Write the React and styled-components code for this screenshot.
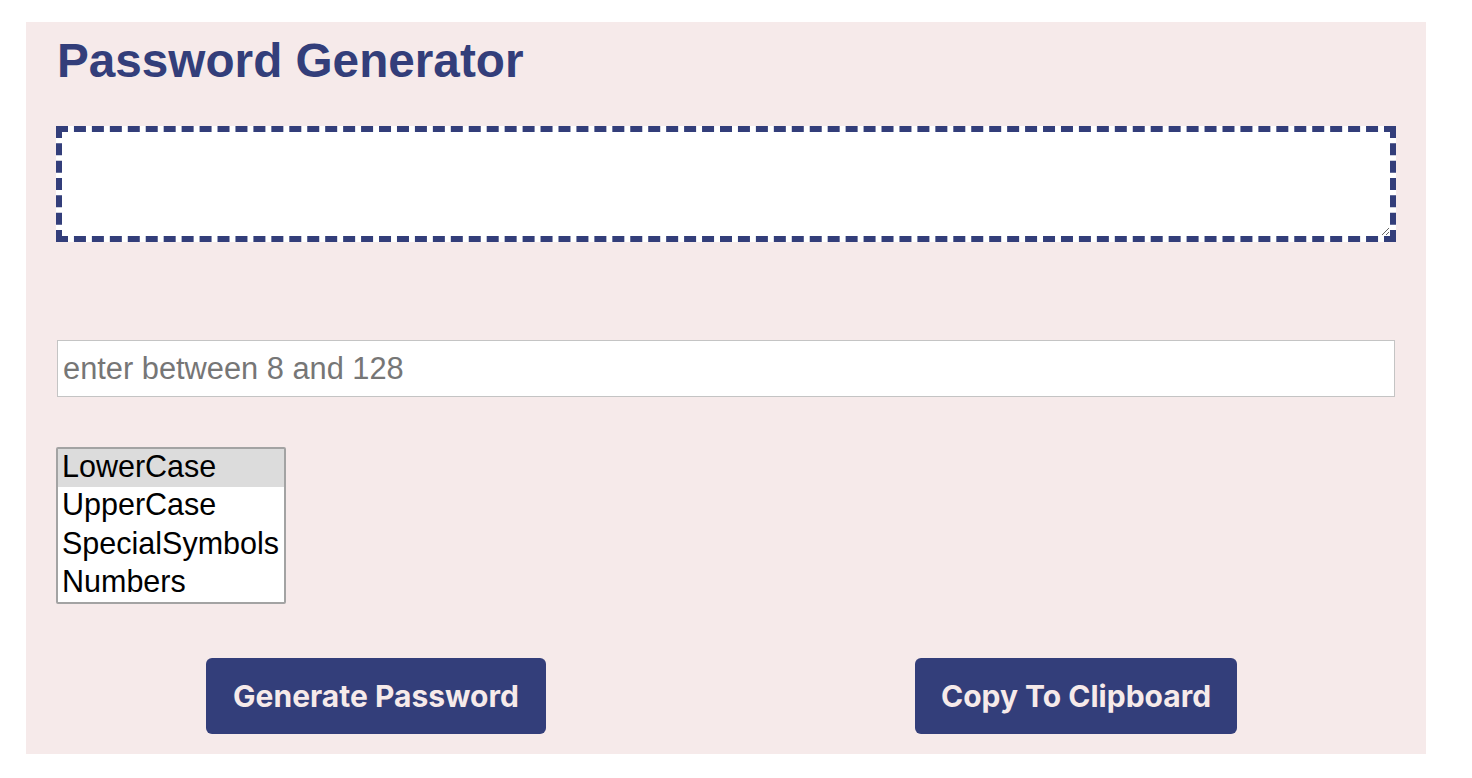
import styled, { createGlobalStyle } from 'styled-components';

const navy = '#333e7a';
const blush = '#f6eaea';

const GlobalStyle = createGlobalStyle`
  html, body {
    margin: 0;
    padding: 0;
    background: #ffffff;
  }
`;

const Card = styled.div`
  width: 1400px;
  height: 732px;
  box-sizing: border-box;
  margin: 22px 0 0 26px;
  padding: 0 30px;
  background-color: ${blush};
  display: flex;
  flex-direction: column;
`;

const Title = styled.h1`
  margin: 12px 0 0 1px;
  font-family: "Liberation Sans", Arial, sans-serif;
  font-weight: 700;
  font-size: 47.7px;
  line-height: 54px;
  color: ${navy};
`;

const Output = styled.textarea`
  display: block;
  margin-top: 38px;
  width: 1340px;
  height: 116px;
  box-sizing: border-box;
  border: 6px dashed ${navy};
  background: #fff;
  outline: none;
`;

const LengthInput = styled.input`
  display: block;
  margin: 98px 0 0 1px;
  width: 1338px;
  height: 57px;
  box-sizing: border-box;
  padding: 0 5px;
  border: 1px solid #c4c4c4;
  background: #fff;
  font-family: "Liberation Sans", Arial, sans-serif;
  font-size: 30.8px;
  outline: none;

  &::placeholder {
    color: #767676;
  }
`;

const Options = styled.select`
  display: block;
  margin-top: 50px;
  width: 230px;
  height: 157px;
  box-sizing: border-box;
  padding: 0;
  border: 2px solid #a3a3a3;
  background: #fff;
  font-family: "Liberation Sans", Arial, sans-serif;
  font-size: 30.5px;
  color: #000;
  overflow: hidden;
  outline: none;

  option {
    height: 38.25px;
    line-height: 38.25px;
    padding: 0 4px;
    box-sizing: border-box;
  }

  option:checked {
    background: #dcdcdc linear-gradient(#dcdcdc, #dcdcdc);
    color: #000;
  }
`;

const ButtonRow = styled.div`
  display: grid;
  grid-template-columns: 1fr 1fr;
  margin: 54px -30px 0;
`;

const Button = styled.button`
  justify-self: center;
  height: 76px;
  padding: 0 ${(p) => p.$pad}px;
  border: none;
  border-radius: 6px;
  background-color: ${navy};
  color: ${blush};
  font-family: Inter, "Liberation Sans", sans-serif;
  font-weight: 700;
  font-size: 30px;
  cursor: pointer;
`;

export default function App() {
  return (
    <>
      <GlobalStyle />
      <Card>
        <Title>Password Generator</Title>
        <Output readOnly />
        <LengthInput type="text" placeholder="enter between 8 and 128" />
        <Options multiple size={4} defaultValue={['lower']}>
          <option value="lower">LowerCase</option>
          <option value="upper">UpperCase</option>
          <option value="special">SpecialSymbols</option>
          <option value="numbers">Numbers</option>
        </Options>
        <ButtonRow>
          <Button $pad={27}>Generate Password</Button>
          <Button $pad={26}>Copy To Clipboard</Button>
        </ButtonRow>
      </Card>
    </>
  );
}
